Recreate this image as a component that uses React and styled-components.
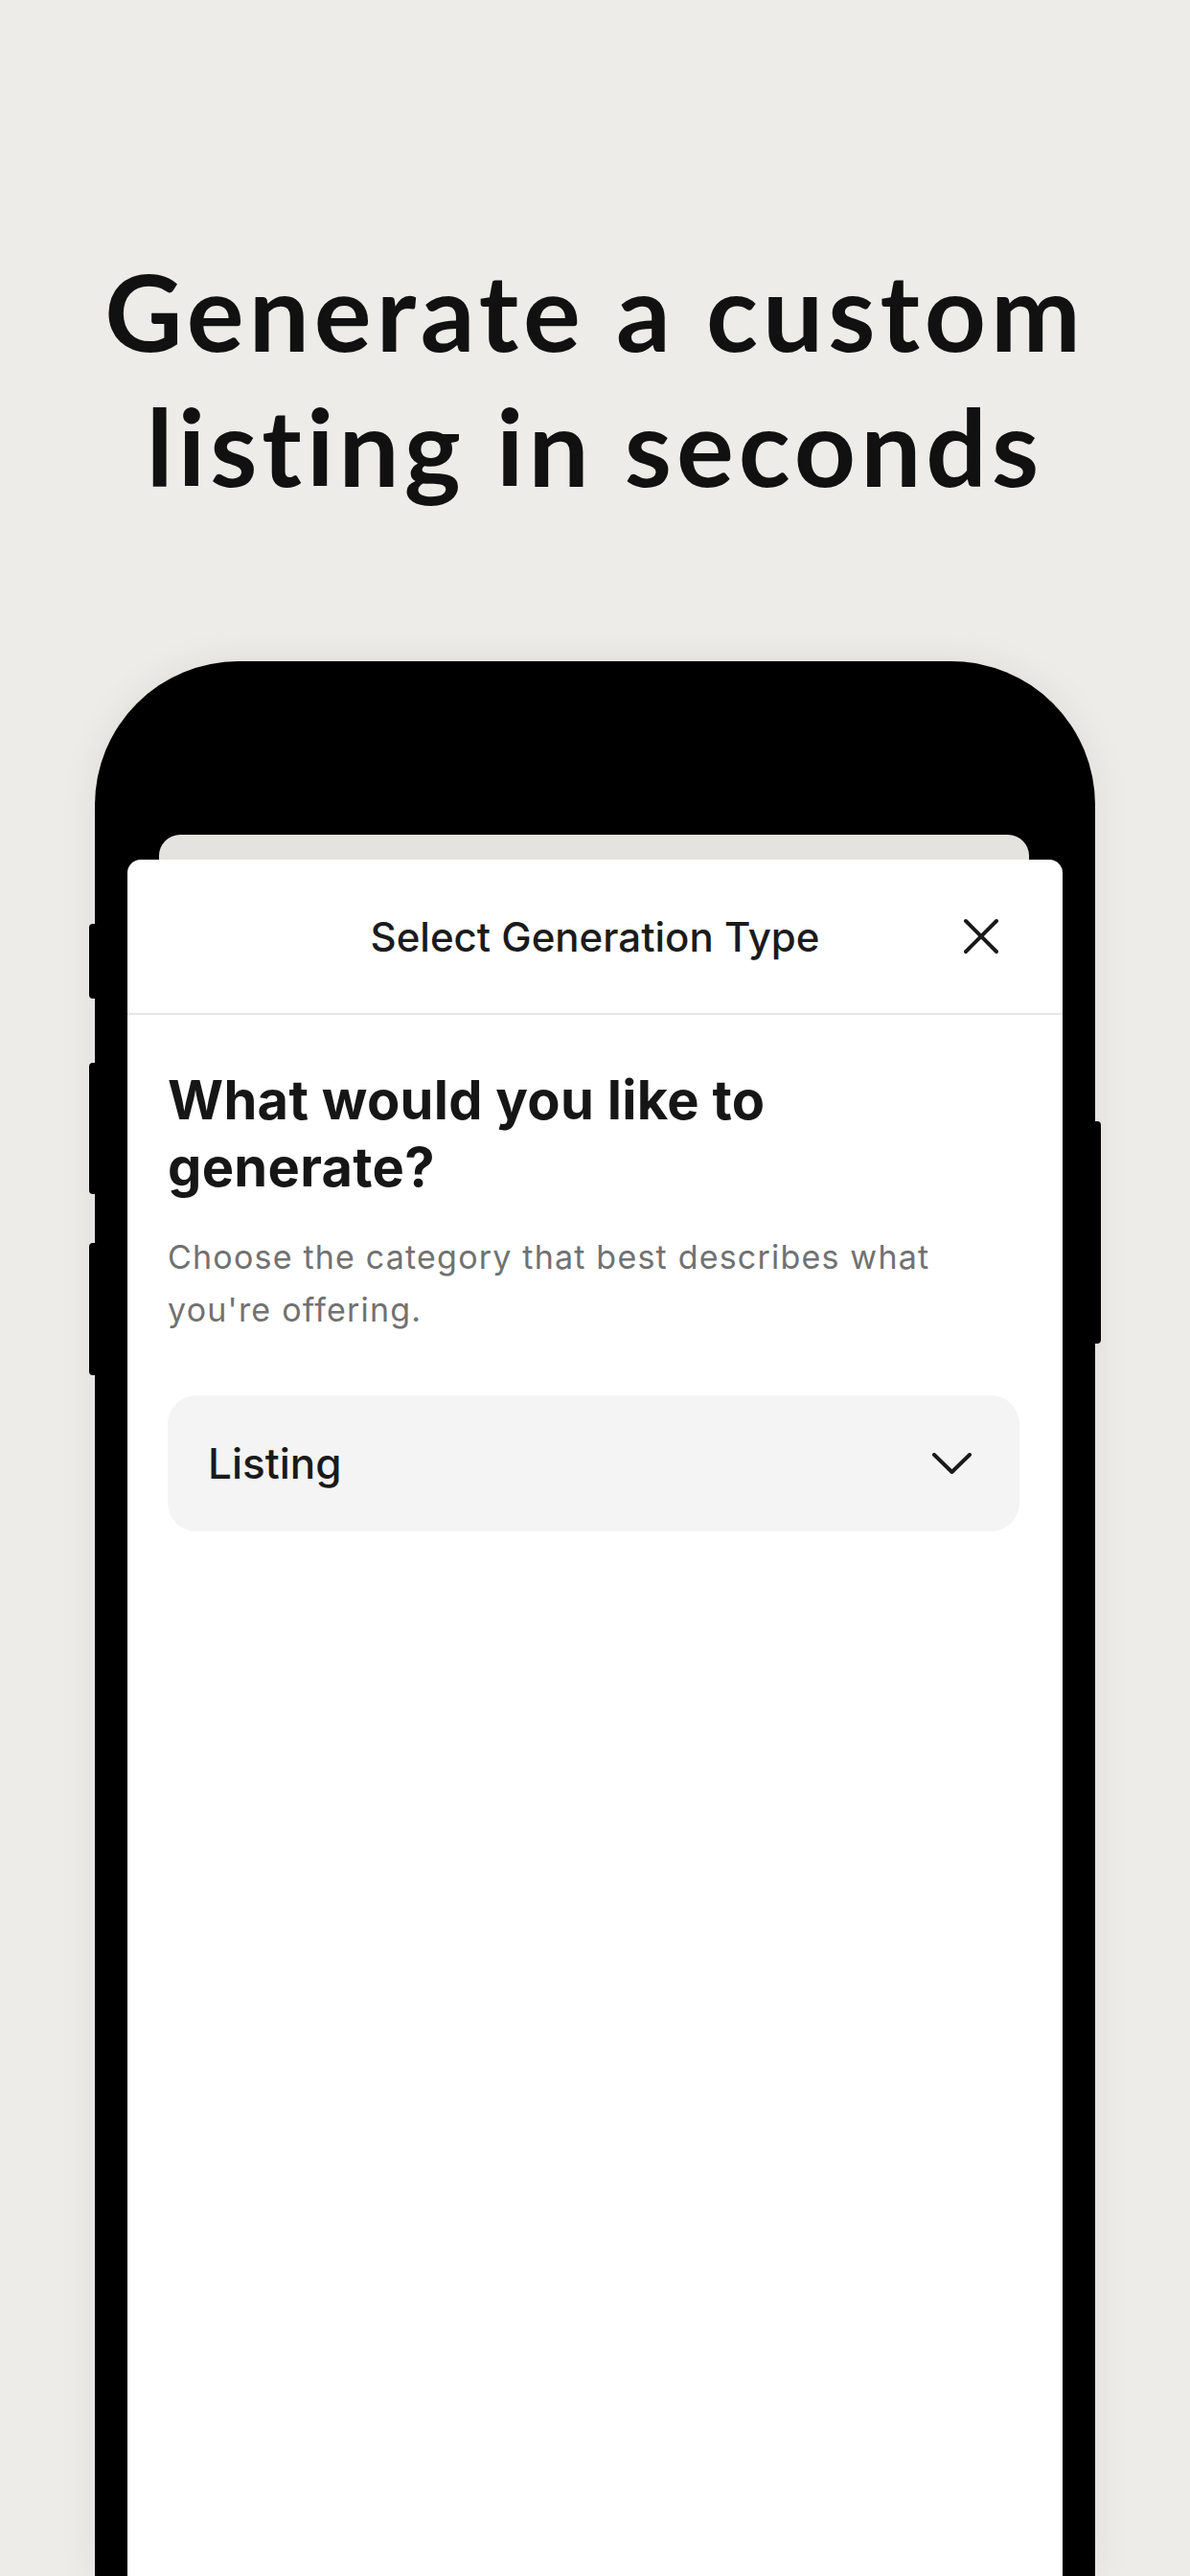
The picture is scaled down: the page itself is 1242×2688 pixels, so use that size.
import React from 'react';
import styled, { createGlobalStyle } from 'styled-components';

const GlobalStyle = createGlobalStyle`
  html, body {
    margin: 0;
    padding: 0;
    background: #edece8;
  }
  body {
    font-family: Inter, "Noto Sans", sans-serif;
    -webkit-font-smoothing: antialiased;
  }
`;

const Page = styled.div`
  width: 1242px;
  height: 2688px;
  overflow: hidden;
  display: flex;
  flex-direction: column;
  align-items: center;
  background: #edece8;
`;

const Headline = styled.h1`
  margin: 0;
  padding-top: 253px;
  font-family: Lato, "Open Sans", sans-serif;
  font-weight: 700;
  font-size: 112px;
  line-height: 141px;
  letter-spacing: 5px;
  font-variant-ligatures: none;
  text-align: center;
  color: #111;
`;

const Phone = styled.div`
  position: relative;
  margin-top: 155px;
  width: 1044px;
  flex: 1;
  box-sizing: border-box;
  padding: 181px 34px 0;
  background: #000;
  border-radius: 150px 150px 0 0;
  display: flex;
  flex-direction: column;
  box-shadow: 0 0 40px rgba(0, 0, 0, 0.07);
`;

const SideKey = styled.div`
  position: absolute;
  top: ${({ top }) => top}px;
  height: ${({ size }) => size}px;
  width: 6px;
  background: #000;
  ${({ right }) => right
    ? 'right: -6px; border-radius: 0 4px 4px 0;'
    : 'left: -6px; border-radius: 4px 0 0 4px;'}
`;

const BackCard = styled.div`
  height: 26px;
  margin: 0 35px 0 33px;
  background: #e4e3df;
  border-radius: 22px 22px 0 0;
`;

const Sheet = styled.div`
  flex: 1;
  background: #fff;
  border-radius: 14px 14px 0 0;
  display: flex;
  flex-direction: column;
`;

const SheetHeader = styled.div`
  height: 160px;
  display: grid;
  grid-template-columns: 1fr auto 1fr;
  align-items: center;
  padding: 0 66px;
  border-bottom: 2px solid #e6e6e6;
`;

const SheetTitle = styled.div`
  grid-column: 2;
  font-size: 42px;
  font-weight: 500;
  color: #1b1b1b;
`;

const CloseButton = styled.button`
  grid-column: 3;
  justify-self: end;
  display: flex;
  padding: 0;
  border: 0;
  background: none;
  color: #1a1a1a;
`;

const Body = styled.div`
  padding: 54px 45px 0 42px;
  display: flex;
  flex-direction: column;
`;

const Question = styled.h2`
  margin: 0;
  max-width: 800px;
  font-size: 56px;
  font-weight: 700;
  line-height: 70px;
  letter-spacing: 0.3px;
  color: #161616;
`;

const Hint = styled.p`
  margin: 31px 0 0;
  max-width: 830px;
  font-size: 34px;
  line-height: 55px;
  letter-spacing: 1.2px;
  color: #717171;
`;

const Select = styled.div`
  margin-top: 62px;
  height: 142px;
  border-radius: 30px;
  background: #f4f4f4;
  display: flex;
  align-items: center;
  justify-content: space-between;
  padding: 0 50px 0 42px;
`;

const SelectLabel = styled.span`
  font-size: 44px;
  font-weight: 500;
  color: #1a1a1a;
`;

const CloseIcon = () => (
  <svg width="38" height="38" viewBox="0 0 38 38" fill="none">
    <path d="M3 3L35 35M35 3L3 35" stroke="currentColor" strokeWidth="4" strokeLinecap="round" />
  </svg>
);

const Chevron = () => (
  <svg width="41" height="22" viewBox="0 0 41 22" fill="none">
    <path d="M2 2L20.5 20L39 2" stroke="#1a1a1a" strokeWidth="4" strokeLinecap="round" strokeLinejoin="round" />
  </svg>
);

const App = () => {
  return (
    <>
      <GlobalStyle />
      <Page>
        <Headline>
          Generate a custom
          <br />
          listing in seconds
        </Headline>
        <Phone>
          <SideKey top={274} size={78} />
          <SideKey top={419} size={137} />
          <SideKey top={607} size={138} />
          <SideKey right top={480} size={232} />
          <BackCard />
          <Sheet>
            <SheetHeader>
              <SheetTitle>Select Generation Type</SheetTitle>
              <CloseButton aria-label="Close">
                <CloseIcon />
              </CloseButton>
            </SheetHeader>
            <Body>
              <Question>What would you like to generate?</Question>
              <Hint>Choose the category that best describes what you're offering.</Hint>
              <Select>
                <SelectLabel>Listing</SelectLabel>
                <Chevron />
              </Select>
            </Body>
          </Sheet>
        </Phone>
      </Page>
    </>
  );
};

export default App;
